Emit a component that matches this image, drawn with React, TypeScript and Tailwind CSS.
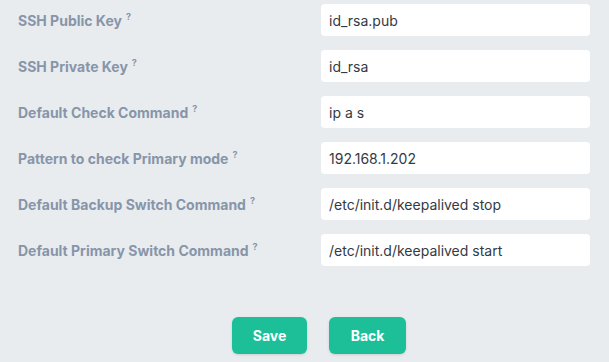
const rows: [string, string][] = [
  ['SSH Public Key', 'id_rsa.pub'],
  ['SSH Private Key', 'id_rsa'],
  ['Default Check Command', 'ip a s'],
  ['Pattern to check Primary mode', '192.168.1.202'],
  ['Default Backup Switch Command', '/etc/init.d/keepalived stop'],
  ['Default Primary Switch Command', '/etc/init.d/keepalived start'],
];

export default function App() {
  return (
    <div className="min-h-[362px] w-[609px] bg-[#e9ecef] pt-1 font-['Inter',sans-serif]">
      <div className="flex flex-col gap-[14px] pl-[18px] pr-[19px]">
        {rows.map(([label, value]) => (
          <div key={label} className="flex items-center">
            <label className="w-[303px] pt-[3px] text-[14px] leading-5 font-bold text-[#8795a9]">
              {label}
              <span className="relative -top-[6px] ml-[4px] text-[9px] font-bold">?</span>
            </label>
            <input
              readOnly
              value={value}
              className="h-8 flex-1 rounded bg-white px-2 text-[14px] text-[#333a44] outline-none"
            />
          </div>
        ))}
      </div>
      <div className="mt-[51px] flex gap-[22px] pl-[232px]">
        <button className="h-[37px] w-[75px] rounded-md bg-[#1dbf98] text-[14px] font-bold text-white shadow-sm">
          Save
        </button>
        <button className="h-[37px] w-[77px] rounded-md bg-[#1dbf98] text-[14px] font-bold text-white shadow-sm">
          Back
        </button>
      </div>
    </div>
  );
}
